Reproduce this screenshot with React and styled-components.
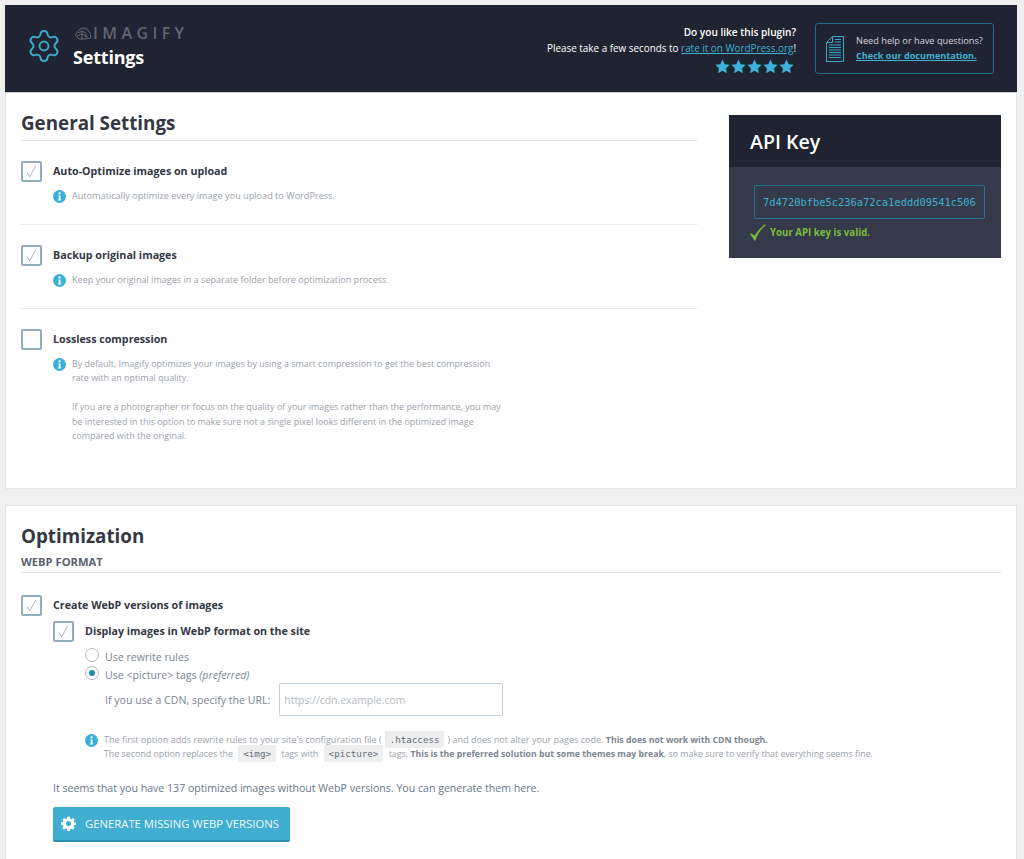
import React from "react";
import styled, { createGlobalStyle } from "styled-components";
import { Settings } from "lucide-react";

const Global = createGlobalStyle`
  html, body { margin: 0; padding: 0; background: #f0f0f1; height: 859px; overflow: hidden; }
  body { font-family: "Open Sans", "Noto Sans", sans-serif; color: #40464f; }
  * { box-sizing: border-box; }
`;
const Page = styled.div`
  width: 1012px; margin-left: 5px; padding-top: 5px; height: 859px; overflow: hidden;
`;
const Header = styled.header`
  height: 88px; background: #1f2332; display: flex; align-items: flex-start; justify-content: space-between;
  border-bottom: 1px solid #c9cbd0;
`;
const Brand = styled.div`
  display: flex; padding: 21px 0 0 21px; gap: 11px;
`;
const BrandGear = styled(Settings)`
  flex: none; margin-top: 2px; color: #3aa9cb;
`;
const BrandText = styled.div`
  display: flex; flex-direction: column;
`;
const Logo = styled.div`
  display: flex; align-items: center; gap: 1px; height: 16px; color: #62656f;
  font-size: 16px; font-weight: 600; letter-spacing: 4.4px; line-height: 16px; margin-top: -1px; margin-left: 1px;
`;
const PageName = styled.div`
  color: #fff; font-size: 18px; font-weight: 700; line-height: 24px; margin-top: 4px; letter-spacing: -0.2px;
`;
const HeaderRight = styled.div`
  display: flex; padding: 18px 23px 0 0; gap: 19px;
`;
const Rate = styled.div`
  text-align: right; color: #fff; font-size: 9.9px; line-height: 16px; padding-top: 1px;
  strong { display: block; font-weight: 600; font-size: 10.1px; }
  a { color: #40b1d0; text-decoration: underline; }
`;
const Stars = styled.div`
  display: flex; justify-content: flex-end; gap: 1px; margin-top: 3px; padding-right: 2px;
`;
const Docs = styled.div`
  width: 179px; height: 51px; border: 1px solid #1f6c85; border-radius: 3px; display: flex; align-items: center; padding-left: 10px; gap: 12px;
  color: #d5d7dc; font-size: 9.2px; line-height: 14.5px; white-space: nowrap;
  a { color: #40b1d0; font-weight: 700; font-size: 9.1px; display: block; text-decoration: underline; }
`;
const Card = styled.section`
  background: #fff; border: 1px solid #e5e5e5; border-top: ${p => (p.$flush ? "none" : "1px solid #e5e5e5")};
  display: flex; justify-content: space-between;
  height: ${p => p.$height}; padding: ${p => p.$pad}; margin-bottom: 16px;
`;
const Main = styled.div`
  width: ${p => p.$width};
`;
const Title = styled.h2`
  margin: 0; font-size: 18.8px; font-weight: 700; line-height: 26px; color: #343844;
`;
const SubTitle = styled.h3`
  margin: 5px 0 0; font-size: 11.2px; font-weight: 700; line-height: 15px; color: #5a616e; padding-bottom: 3px;
  border-bottom: 1px solid #e3e4e6; text-transform: uppercase;
`;
const TitleRule = styled.div`
  border-bottom: 1px solid #e3e4e6; padding-bottom: 4px; margin-bottom: 20px;
`;
const Option = styled.div`
  display: flex; gap: 11px; align-items: flex-start;
  margin-left: ${p => p.$indent || 0};
  margin-top: ${p => p.$top || 0};
`;
const OptionBlock = styled.div`
  padding-bottom: 20.6px; margin-bottom: 20px;
  border-bottom: ${p => (p.$rule ? "1px solid #e9e9eb" : "none")};
`;
const Box = styled.span`
  width: 21px; height: 21px; flex: none; border: 2px solid #94adbb; border-radius: 2px; background: #fff;
  display: flex; align-items: center; justify-content: center;
`;
const Label = styled.div`
  font-size: 10.7px; font-weight: 700; line-height: 20px; color: #343844;
`;
const Help = styled.div`
  display: flex; gap: 6px; margin: ${p => p.$margin || "7px 0 0 32px"};
  color: #9ba2aa; font-size: ${p => p.$size || "9.2px"}; line-height: 14.4px;
  strong { font-weight: 700; color: #7d8592; font-size: 8.75px; }
  p { margin: 0; white-space: nowrap; }
  p + p { margin-top: 14.4px; }
`;
const HelpLine = styled.div`
  font-size: ${p => p.$size}; white-space: nowrap;
`;
const InfoIcon = styled.svg`
  width: 13px; height: 13px; flex: none; margin-top: 1px;
`;
const Panel = styled.aside`
  width: 272px; height: 143px; background: #343a49; margin: 5px 15px 0 0;
`;
const PanelHead = styled.div`
  height: 52px; background: #1f2332; color: #fff; font-size: 19.6px; font-weight: 600; padding: 0 21px; display: flex; align-items: center;
`;
const KeyField = styled.div`
  margin: 18px 0 0 25px; width: 231px; height: 34px; border: 1px solid #26738d; border-radius: 2px; color: #40b1d0;
  font-family: "DejaVu Sans Mono", monospace; font-size: 10.4px; display: flex; align-items: center; padding-left: 8px; white-space: nowrap;
`;
const Valid = styled.div`
  display: flex; align-items: center; margin: 5px 0 0 21px; gap: 4px; color: #7bba3f; font-size: 9.7px; font-weight: 700; height: 17px;
`;
const Radios = styled.div`
  margin: 5px 0 0 64px; color: #7d8590; font-size: 10.6px;
`;
const RadioRow = styled.label`
  display: flex; align-items: center; gap: 6px; height: 18px; line-height: 18px;
  span:last-child { padding-top: 1px; }
`;
const Radio = styled.span`
  width: 14px; height: 14px; border-radius: 50%; border: 1px solid #b3b8bf; background: #fff; display: flex; align-items: center; justify-content: center;
  flex: none; margin-top: -2px;
  &::after { content: ""; width: 6px; height: 6px; border-radius: 50%; background: ${p => (p.$on ? "#1f8ab3" : "transparent")}; }
`;
const CdnRow = styled.div`
  display: flex; align-items: center; height: 34px; margin: -1px 0 0 20px; gap: 9px;
`;
const CdnLabel = styled.span`
  padding-top: 2px;
`;
const CdnInput = styled.div`
  width: 224px; height: 33px; border: 1px solid #c6d3dc; border-radius: 1px; color: #b4b9bf; font-size: 10.4px; line-height: 33px; padding-left: 4px;
`;
const Code = styled.code`
  font-family: "DejaVu Sans Mono", monospace; font-size: 9.2px; background: #eeeeee; color: #646b76; padding: 3px 5px; margin: 0 3px;
`;
const Notice = styled.div`
  font-size: 10.6px; line-height: 15px; color: #69778a; margin: 19px 0 0 32px;
`;
const Generate = styled.div`
  display: flex; align-items: center; gap: 9px; width: 237px; height: 35px; background: #40aed0; border-bottom: 2px solid #2b8cab; border-radius: 2px;
  color: #f1f9fb; font-size: 11.3px; padding-left: 8px; margin: 11px 0 0 32px; text-transform: uppercase; white-space: nowrap;
`;

const Info = () => (
  <InfoIcon viewBox="0 0 13 13">
    <circle cx="6.5" cy="6.5" r="6.5" fill="#3cb0d4" />
    <circle cx="6.6" cy="3.4" r="1.1" fill="#fff" />
    <path d="M5.2 5.5h2.3v4.1h.8v.9H4.9v-.9h.9V6.4h-.6z" fill="#fff" />
  </InfoIcon>
);
const Check = ({ on = true }) => (
  <Box>
    {on && (
      <svg width="13" height="13" viewBox="0 0 13 13" fill="none">
        <path d="M2 7.5 L4.7 11.8 L10.8 1" stroke="#a3b8c4" strokeWidth="1" />
      </svg>
    )}
  </Box>
);
const Star = () => (
  <svg width="15" height="15" viewBox="0 0 24 24" fill="#3db5d8">
    <path d="M12 .8l3.5 7.4 8 1-5.9 5.5 1.6 8.1L12 18.8l-7.2 4 1.6-8.1L.5 9.2l8-1z" />
  </svg>
);
const SolidGear = () => (
  <svg width="15" height="15" viewBox="0 0 24 24" fill="#fff">
    <path fillRule="evenodd" d="M10 1h4l.6 3.2 1.9.8L19.2 3.2l2.8 2.8-1.8 2.7.8 1.9L24 10v4l-3.2.6-.8 1.9 1.8 2.7-2.8 2.8-2.7-1.8-1.9.8L14 24h-4l-.6-3.2-1.9-.8-2.7 1.8L2 19.2l1.8-2.7-.8-1.9L0 14v-4l3.2-.6.8-1.9L2.2 5.8 5 3l2.7 1.8 1.9-.8zM12 8a4 4 0 100 8 4 4 0 000-8z" />
  </svg>
);
const MiniLogo = () => (
  <svg width="18" height="13" viewBox="0 0 18 13" fill="none" stroke="#62656f" strokeWidth="1">
    <path d="M1 8 L5 3 L8 1 L13 2 L16 6 L17 11 L11 12 L5 12 Z" />
    <path d="M4 6 L8 4 L12 6 M3 9 L8 7 L14 10 M8 4 V12 M12 7 V12" />
  </svg>
);
const DocIcon = () => (
  <svg width="18" height="26" viewBox="0 0 18 26" fill="none" stroke="#3aa6c8" strokeWidth="1" style={{ flex: "none" }}>
    <path d="M6.5 .5 H17.5 V25.5 H.5 V6.5 Z" />
    <path d="M.5 6.5 H6.5 V.5" />
    <path d="M9 3.5 H15 M9 6 H15 M3 9 H15 M3 11.5 H15 M3 14 H15 M3 16.5 H15 M3 19 H15 M3 21.5 H15" />
  </svg>
);
const Tick = () => (
  <svg width="16" height="17" viewBox="0 0 16 17" fill="none">
    <path d="M1 10 L4.8 16 C6.5 10.5 9.5 5.5 15 1 C10.5 4.5 7 8.5 4.8 12.5 Z" fill="#7bba3f" stroke="#7bba3f" strokeWidth="1.4" strokeLinejoin="round" />
  </svg>
);

export default function App() {
  return (
    <Page>
      <Global />
      <Header>
        <Brand>
          <BrandGear size={36} strokeWidth={1.3} />
          <BrandText>
            <Logo><MiniLogo />IMAGIFY</Logo>
            <PageName>Settings</PageName>
          </BrandText>
        </Brand>
        <HeaderRight>
          <Rate>
            <strong>Do you like this plugin?</strong>
            Please take a few seconds to <a>rate it on WordPress.org</a>!
            <Stars><Star /><Star /><Star /><Star /><Star /></Stars>
          </Rate>
          <Docs>
            <DocIcon />
            <div>
              Need help or have questions?
              <a>Check our documentation.</a>
            </div>
          </Docs>
        </HeaderRight>
      </Header>
      <Card $flush $height="396px" $pad="17px 0 0 15px">
        <Main $width="676px">
          <TitleRule><Title>General Settings</Title></TitleRule>
          <OptionBlock $rule>
            <Option><Check /><Label>Auto-Optimize images on upload</Label></Option>
            <Help $size="9.15px"><Info /><p>Automatically optimize every image you upload to WordPress.</p></Help>
          </OptionBlock>
          <OptionBlock $rule>
            <Option><Check /><Label>Backup original images</Label></Option>
            <Help $size="9.07px"><Info /><p>Keep your original images in a separate folder before optimization process.</p></Help>
          </OptionBlock>
          <OptionBlock>
            <Option><Check on={false} /><Label>Lossless compression</Label></Option>
            <Help $size="8.95px">
              <Info />
              <div>
                <p>By default, Imagify optimizes your images by using a smart compression to get the best compression<br />rate with an optimal quality.</p>
                <p>If you are a photographer or focus on the quality of your images rather than the performance, you may<br />be interested in this option to make sure not a single pixel looks different in the optimized image<br />compared with the original.</p>
              </div>
            </Help>
          </OptionBlock>
        </Main>
        <Panel>
          <PanelHead>API Key</PanelHead>
          <KeyField>7d4720bfbe5c236a72ca1eddd09541c506</KeyField>
          <Valid><Tick />Your API key is valid.</Valid>
        </Panel>
      </Card>
      <Card $height="400px" $pad="17px 15px 0 15px">
        <Main $width="100%">
          <Title>Optimization</Title>
          <SubTitle>WebP Format</SubTitle>
          <Option $top="22px"><Check /><Label>Create WebP versions of images</Label></Option>
          <Option $top="5px" $indent="32px"><Check /><Label>Display images in WebP format on the site</Label></Option>
          <Radios>
            <RadioRow><Radio /><span>Use rewrite rules</span></RadioRow>
            <RadioRow><Radio $on /><span>Use &lt;picture&gt; tags <em>(preferred)</em></span></RadioRow>
            <CdnRow>
              <CdnLabel>If you use a CDN, specify the URL:</CdnLabel>
              <CdnInput>https://cdn.example.com</CdnInput>
            </CdnRow>
          </Radios>
          <Help $margin="17px 0 0 64px">
            <Info />
            <div>
              <HelpLine $size="9.05px">The first option adds rewrite rules to your site's configuration file (<Code>.htaccess</Code>) and does not alter your pages code. <strong>This does not work with CDN though.</strong></HelpLine>
              <HelpLine $size="8.85px">The second option replaces the <Code>&lt;img&gt;</Code> tags with <Code>&lt;picture&gt;</Code> tags. <strong>This is the preferred solution but some themes may break</strong>, so make sure to verify that everything seems fine.</HelpLine>
            </div>
          </Help>
          <Notice>It seems that you have 137 optimized images without WebP versions. You can generate them here.</Notice>
          <Generate><SolidGear />Generate missing WebP versions</Generate>
        </Main>
      </Card>
    </Page>
  );
}
